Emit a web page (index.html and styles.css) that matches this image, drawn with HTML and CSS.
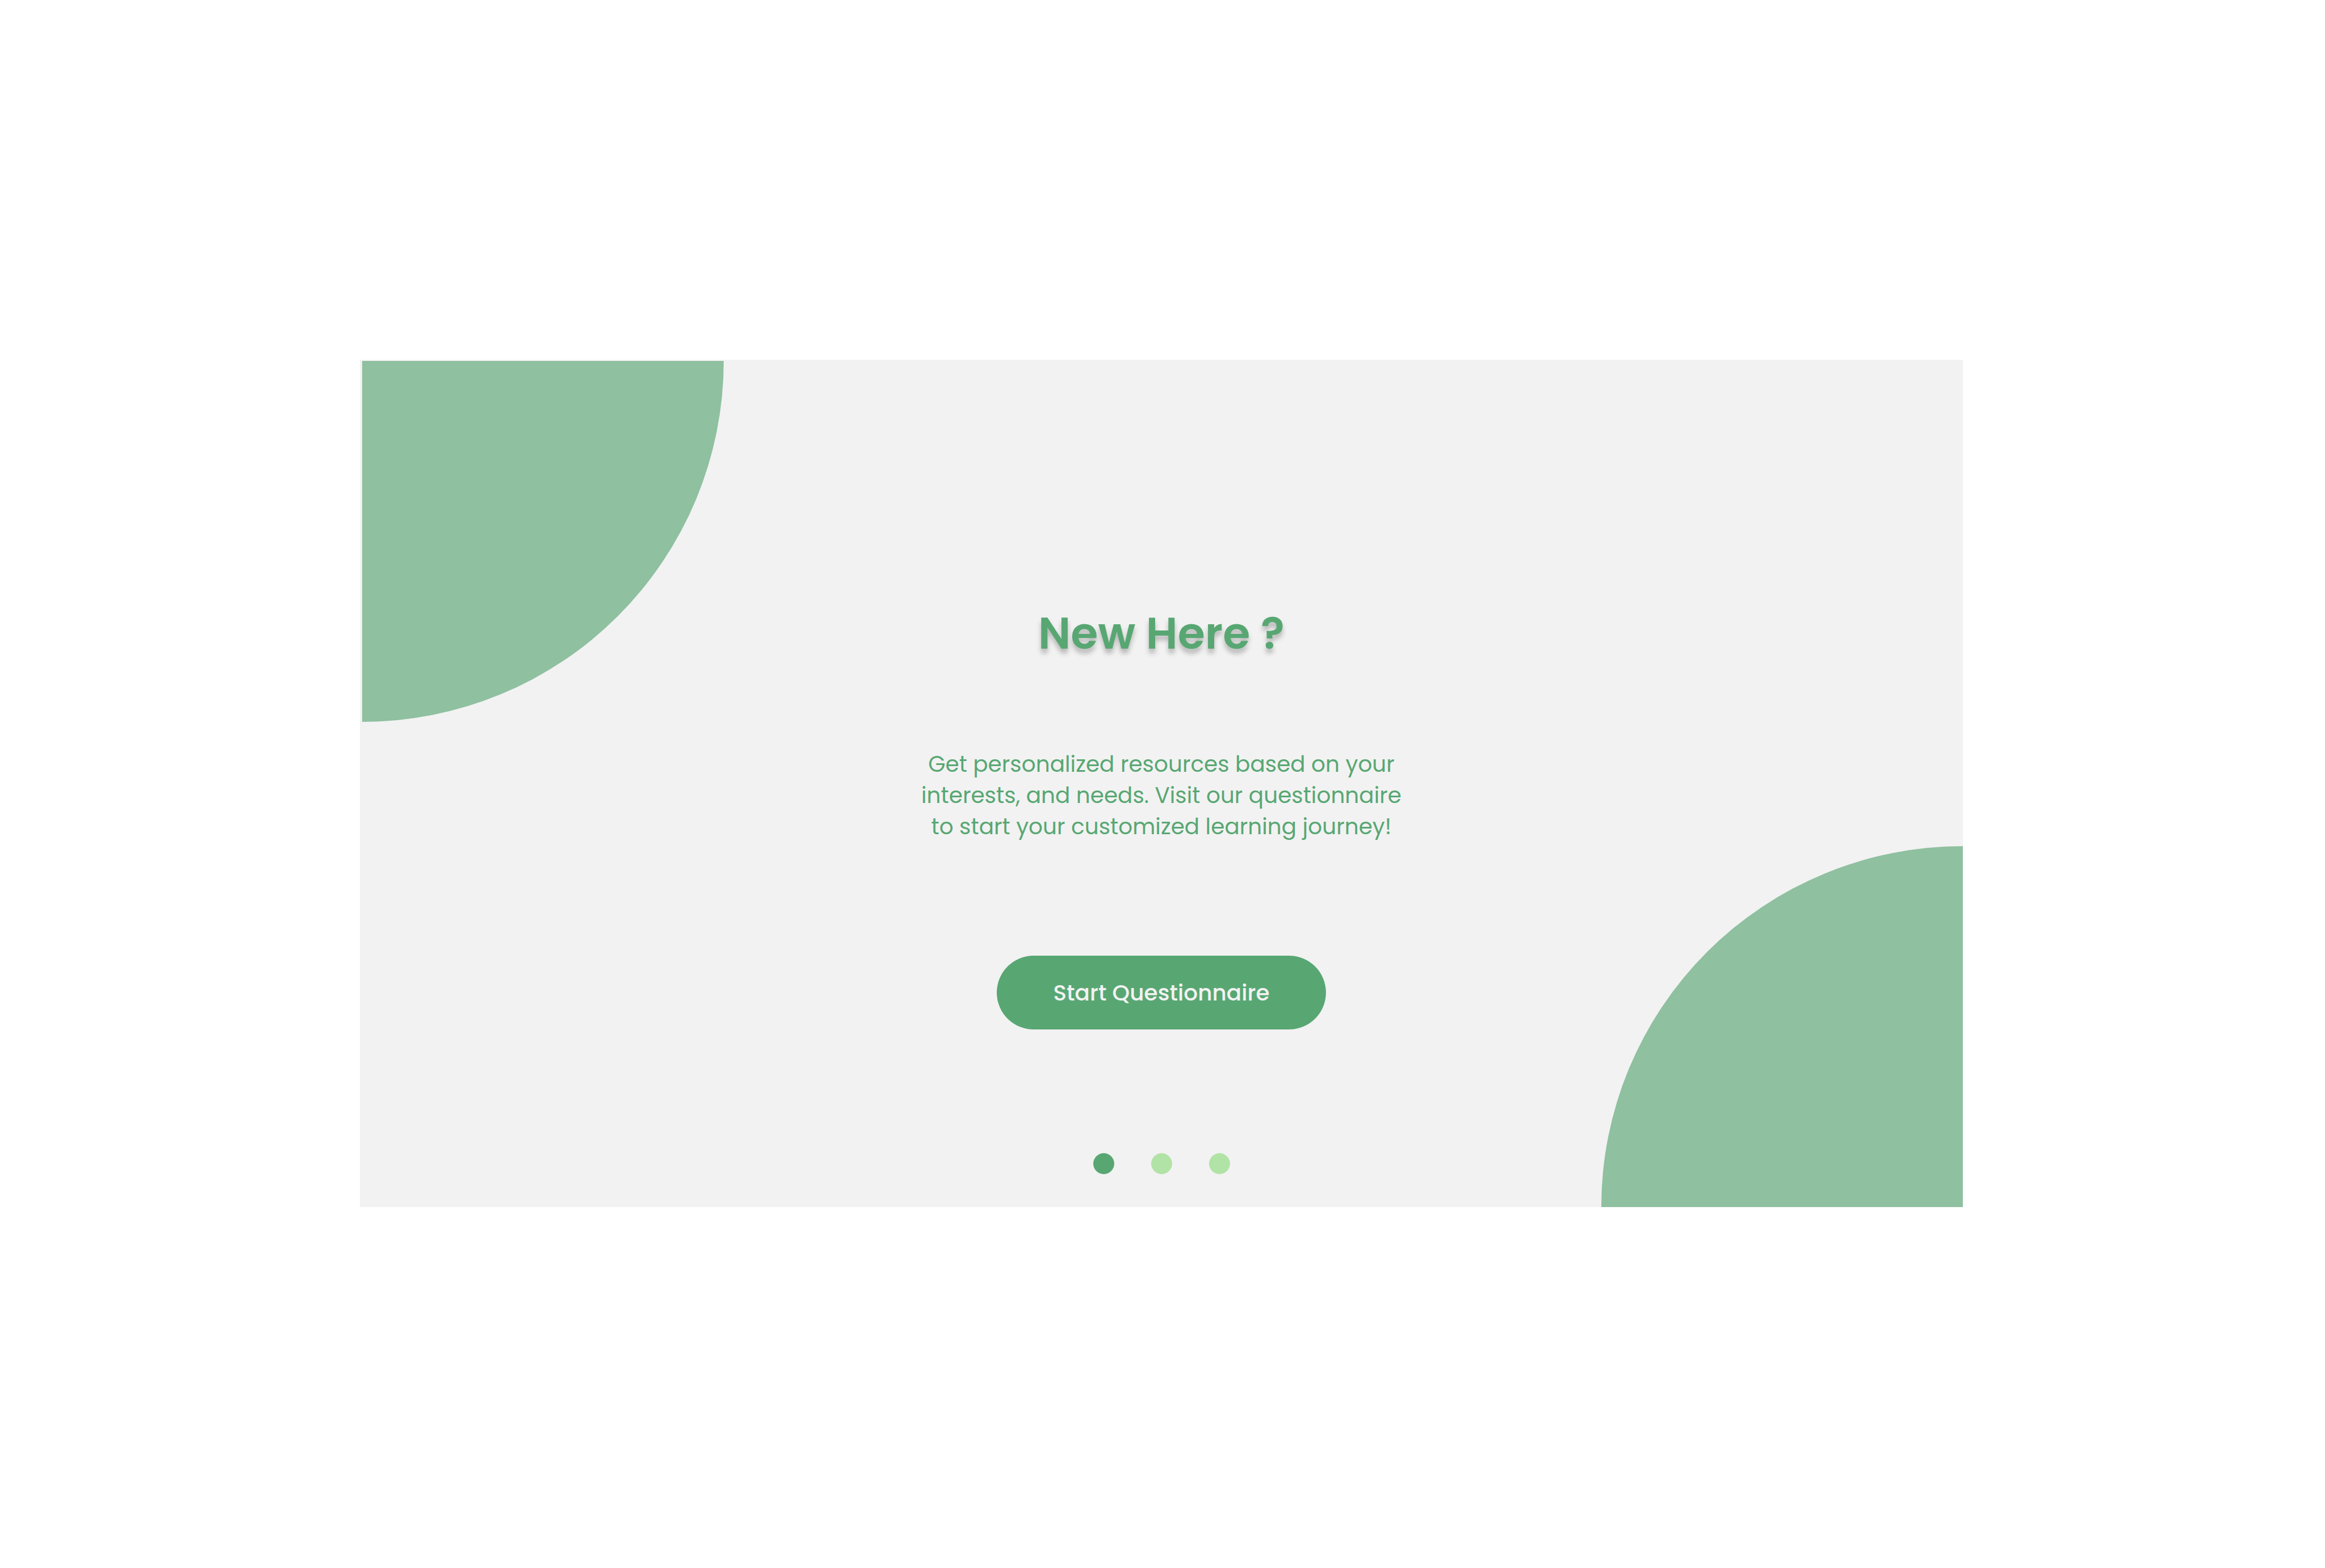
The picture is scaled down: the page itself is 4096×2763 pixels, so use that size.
FILE: index.html
```
<!DOCTYPE html>
<html lang="en">
<head>
<meta charset="utf-8">
<meta name="viewport" content="width=device-width, initial-scale=1">
<title>New Here ?</title>
<link rel="stylesheet" href="styles.css">
</head>
<body>
<main class="card">
  <span class="corner corner-start" aria-hidden="true"></span>
  <span class="corner corner-end" aria-hidden="true"></span>
  <h1 class="title">New Here ?</h1>
  <p class="intro">Get personalized resources based on your<br>interests, and needs. Visit our questionnaire<br>to start your customized learning journey!</p>
  <button class="start" type="button">Start Questionnaire</button>
  <nav class="steps" aria-label="Steps">
    <button class="dot dot-current" type="button" aria-label="Step 1" aria-current="step"></button>
    <button class="dot" type="button" aria-label="Step 2"></button>
    <button class="dot" type="button" aria-label="Step 3"></button>
  </nav>
</main>
</body>
</html>
```
FILE: styles.css
```
* {
  box-sizing: border-box;
}

body {
  display: flex;
  min-height: 100vh;
  margin: 0;
  padding: 634px 638px 636px 634px;
  background: #ffffff;
  font-family: Poppins, Inter, sans-serif;
}

.card {
  position: relative;
  display: flex;
  flex: 1;
  flex-direction: column;
  align-items: center;
  padding: 432px 32px 58px;
  overflow: hidden;
  background: #f2f2f2;
  color: #58a773;
}

.corner {
  position: absolute;
  width: 637px;
  height: 636px;
  background: #8fc0a0;
}

.corner-start {
  top: 2px;
  left: 4px;
  border-bottom-right-radius: 100%;
}

.corner-end {
  right: 0;
  bottom: 0;
  border-top-left-radius: 100%;
}

.title {
  margin: 0;
  font-size: 78px;
  font-weight: 600;
  line-height: 100px;
  text-shadow: 0 8px 8px rgba(0, 0, 0, 0.25);
}

.intro {
  margin: 153px 0 0;
  font-size: 39px;
  line-height: 55px;
  text-align: center;
}

.start {
  width: 580px;
  height: 130px;
  margin: 200px 0 0;
  border: 0;
  border-radius: 65px;
  background: #58a773;
  color: #f2f2f2;
  font-family: inherit;
  font-size: 39px;
  font-weight: 500;
}

.steps {
  display: flex;
  gap: 65px;
  margin-top: auto;
}

.dot {
  width: 37px;
  height: 37px;
  padding: 0;
  border: 0;
  border-radius: 50%;
  background: #b2e3a6;
}

.dot-current {
  background: #58a773;
}
```
